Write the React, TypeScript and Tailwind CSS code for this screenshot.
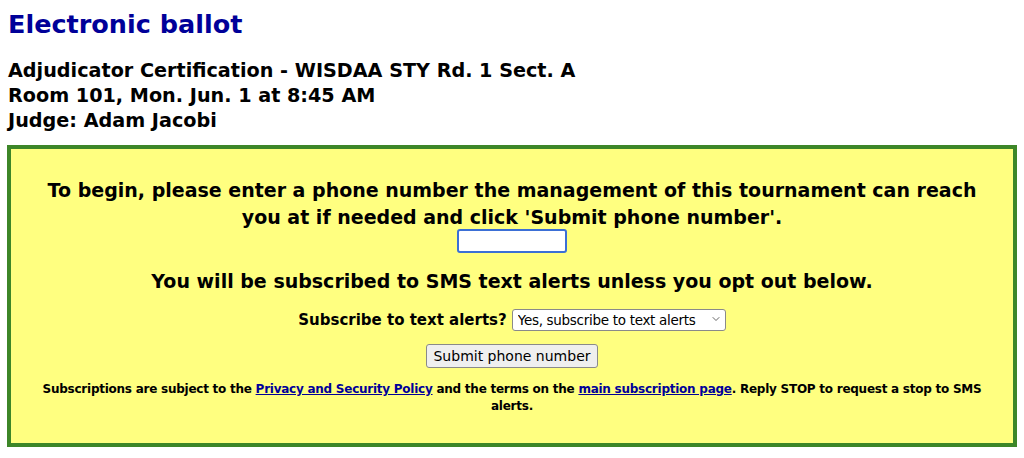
import { ChevronDown } from "lucide-react";

export default function App() {
  return (
    <div className="bg-white font-['DejaVu_Sans',sans-serif] text-black">
      <div className="px-2 pt-[9px]">
        <h1 className="text-[25.5px] font-bold leading-[30px] text-[#000099]">Electronic ballot</h1>
        <div className="mt-[19px] text-[19.2px] font-bold leading-[25px]">
          <div>Adjudicator Certification - WISDAA STY Rd. 1 Sect. A</div>
          <div>Room 101, Mon. Jun. 1 at 8:45 AM</div>
          <div>Judge: Adam Jacobi</div>
        </div>
      </div>
      <div className="mx-[7px] mt-[12px] border-4 border-[#3d8628] bg-[#ffff80] px-6 pb-[28px] pt-[28px] text-center">
        <p className="text-[19px] font-bold leading-[27px]">
          To begin, please enter a phone number the management of this tournament can reach you at if needed and click 'Submit phone number'.
        </p>
        <input
          type="text"
          className="mx-auto -mt-[2px] block h-[24px] w-[110px] rounded-[3px] border-2 border-[#3b6fd6] bg-white"
        />
        <p className="mt-[15px] text-[19px] font-bold leading-[27px]">
          You will be subscribed to SMS text alerts unless you opt out below.
        </p>
        <div className="mt-[13px] flex items-center justify-center gap-[5px]">
          <span className="text-[15px] font-bold">Subscribe to text alerts?</span>
          <div className="relative">
            <select className="h-[22px] w-[214px] appearance-none rounded-[3px] border border-[#8a8a8a] bg-white pl-[5px] pr-[16px] text-left text-[13.5px] tracking-[-0.3px]">
              <option>Yes, subscribe to text alerts</option>
              <option>No, do not subscribe</option>
            </select>
            <ChevronDown
              size={12}
              strokeWidth={1.5}
              className="pointer-events-none absolute right-[4px] top-[5px] text-[#333]"
            />
          </div>
        </div>
        <button className="mt-[12px] h-[24px] w-[172px] rounded-[3px] border border-[#8a8a8a] bg-[#efefef] text-[14px]">
          Submit phone number
        </button>
        <p className="mt-[13px] text-[12px] font-bold leading-[17px] tracking-[-0.25px]">
          Subscriptions are subject to the{" "}
          <a href="#" className="text-[#000099] underline">Privacy and Security Policy</a> and the terms on the{" "}
          <a href="#" className="text-[#000099] underline">main subscription page</a>. Reply STOP to request a stop to SMS alerts.
        </p>
      </div>
    </div>
  );
}
